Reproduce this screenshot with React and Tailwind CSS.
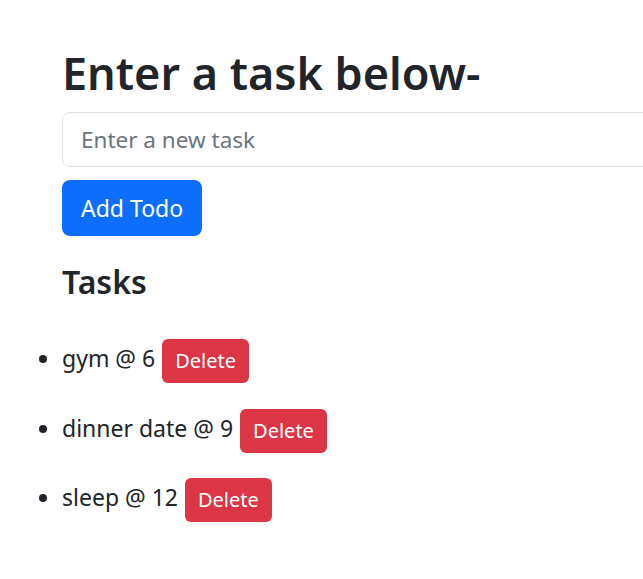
import React, { useState } from 'react';

const initialTodos = ['gym @ 6', 'dinner date @ 9', 'sleep @ 12'];

export default function App() {
  const [todos, setTodos] = useState(initialTodos);
  const [task, setTask] = useState('');

  const addTodo = () => {
    if (!task.trim()) return;
    setTodos([...todos, task]);
    setTask('');
  };

  return (
    <div className="w-[643px] h-[579px] overflow-hidden bg-white text-[#212529] font-['Noto_Sans',sans-serif]">
      <div className="pl-[62px] pt-[44px]">
        <h1 className="text-[45px] leading-[58px] font-semibold whitespace-nowrap">Enter a task below-</h1>
        <input
          type="text"
          value={task}
          onChange={(e) => setTask(e.target.value)}
          placeholder="Enter a new task"
          className="mt-[10px] block w-[700px] h-[55px] px-[18px] text-[22.5px] border border-[#dee2e6] rounded-[8px] placeholder-[#6c757d] focus:outline-none"
        />
        <button
          onClick={addTodo}
          className="mt-[13px] h-[56px] px-[19px] bg-[#0d6efd] text-white text-[23px] rounded-[8px]"
        >
          Add Todo
        </button>
        <h2 className="mt-[24px] text-[32px] leading-[44px] font-semibold">Tasks</h2>
      </div>

      <ul className="list-disc pl-[62px] mt-[35px] text-[23px]">
        {todos.map((t, i) => (
          <li key={i} className="h-[69.5px]">
            {t}{' '}
            <button
              onClick={() => setTodos(todos.filter((_, j) => j !== i))}
              className="ml-[1px] h-[44px] px-[13px] bg-[#dc3545] text-white text-[20px] rounded-[6px] align-middle"
            >
              Delete
            </button>
          </li>
        ))}
      </ul>
    </div>
  );
}
